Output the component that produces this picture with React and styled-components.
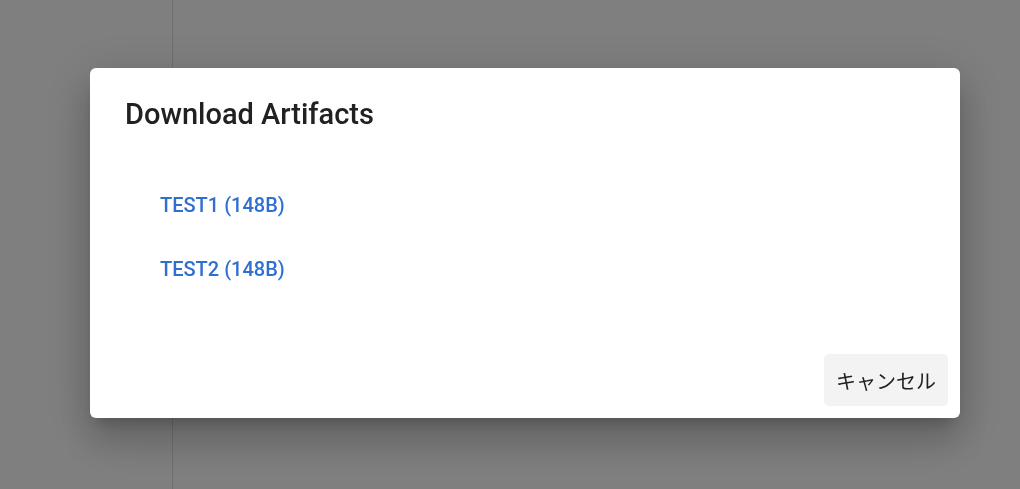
import React from "react"
import styled, { createGlobalStyle } from "styled-components"

const GlobalStyle = createGlobalStyle`
  html, body {
    margin: 0;
    padding: 0;
    height: 100%;
    background: #ffffff;
    font-family: Roboto, "Noto Sans CJK JP", sans-serif;
  }
  #root {
    height: 100%;
  }
`

const Page = styled.div`
  display: flex;
  height: 489px;
  background: #ffffff;
`

const Sidebar = styled.div`
  width: 172px;
  border-right: 1px solid #dedede;
  flex-shrink: 0;
`

const Overlay = styled.div`
  position: fixed;
  inset: 0;
  background: rgba(0, 0, 0, 0.5);
  display: flex;
  align-items: flex-start;
  justify-content: flex-start;
  padding: 68px 0 0 90px;
`

const Dialog = styled.div`
  width: 870px;
  height: 350px;
  background: #ffffff;
  border-radius: 6px;
  box-shadow: 0 11px 15px -7px rgba(0, 0, 0, 0.2),
    0 24px 38px 3px rgba(0, 0, 0, 0.14), 0 9px 46px 8px rgba(0, 0, 0, 0.12);
  display: flex;
  flex-direction: column;
  box-sizing: border-box;
`

const Title = styled.h2`
  margin: 0;
  padding: 27px 35px 0;
  font-family: Roboto, sans-serif;
  font-size: 29px;
  font-weight: 500;
  line-height: 38px;
  color: #212121;
`

const List = styled.ul`
  list-style: none;
  margin: 0;
  padding: 60px 0 0 70px;
  flex: 1;
  display: flex;
  flex-direction: column;
  gap: 40px;
`

const Item = styled.li`
  height: 24px;
  display: flex;
  align-items: center;
`

const Link = styled.a`
  font-family: Roboto, sans-serif;
  font-size: 20px;
  font-weight: 500;
  color: #2f6fcf;
  text-decoration: none;
  cursor: pointer;
`

const Actions = styled.div`
  display: flex;
  justify-content: flex-end;
  padding: 0 12px 12px;
`

const CancelButton = styled.button`
  height: 52px;
  padding: 0 12px;
  min-width: 124px;
  border: none;
  border-radius: 5px;
  background: #f3f3f3;
  color: #212121;
  font-family: "Noto Sans CJK JP", sans-serif;
  font-size: 20px;
  cursor: pointer;
`

const artifacts = [
  { name: "TEST1", size: "148B" },
  { name: "TEST2", size: "148B" },
]

const App = () => (
  <>
    <GlobalStyle />
    <Page>
      <Sidebar />
    </Page>
    <Overlay>
      <Dialog>
        <Title>Download Artifacts</Title>
        <List>
          {artifacts.map((a) => (
            <Item key={a.name}>
              <Link>
                {a.name} ({a.size})
              </Link>
            </Item>
          ))}
        </List>
        <Actions>
          <CancelButton>キャンセル</CancelButton>
        </Actions>
      </Dialog>
    </Overlay>
  </>
)

export default App
